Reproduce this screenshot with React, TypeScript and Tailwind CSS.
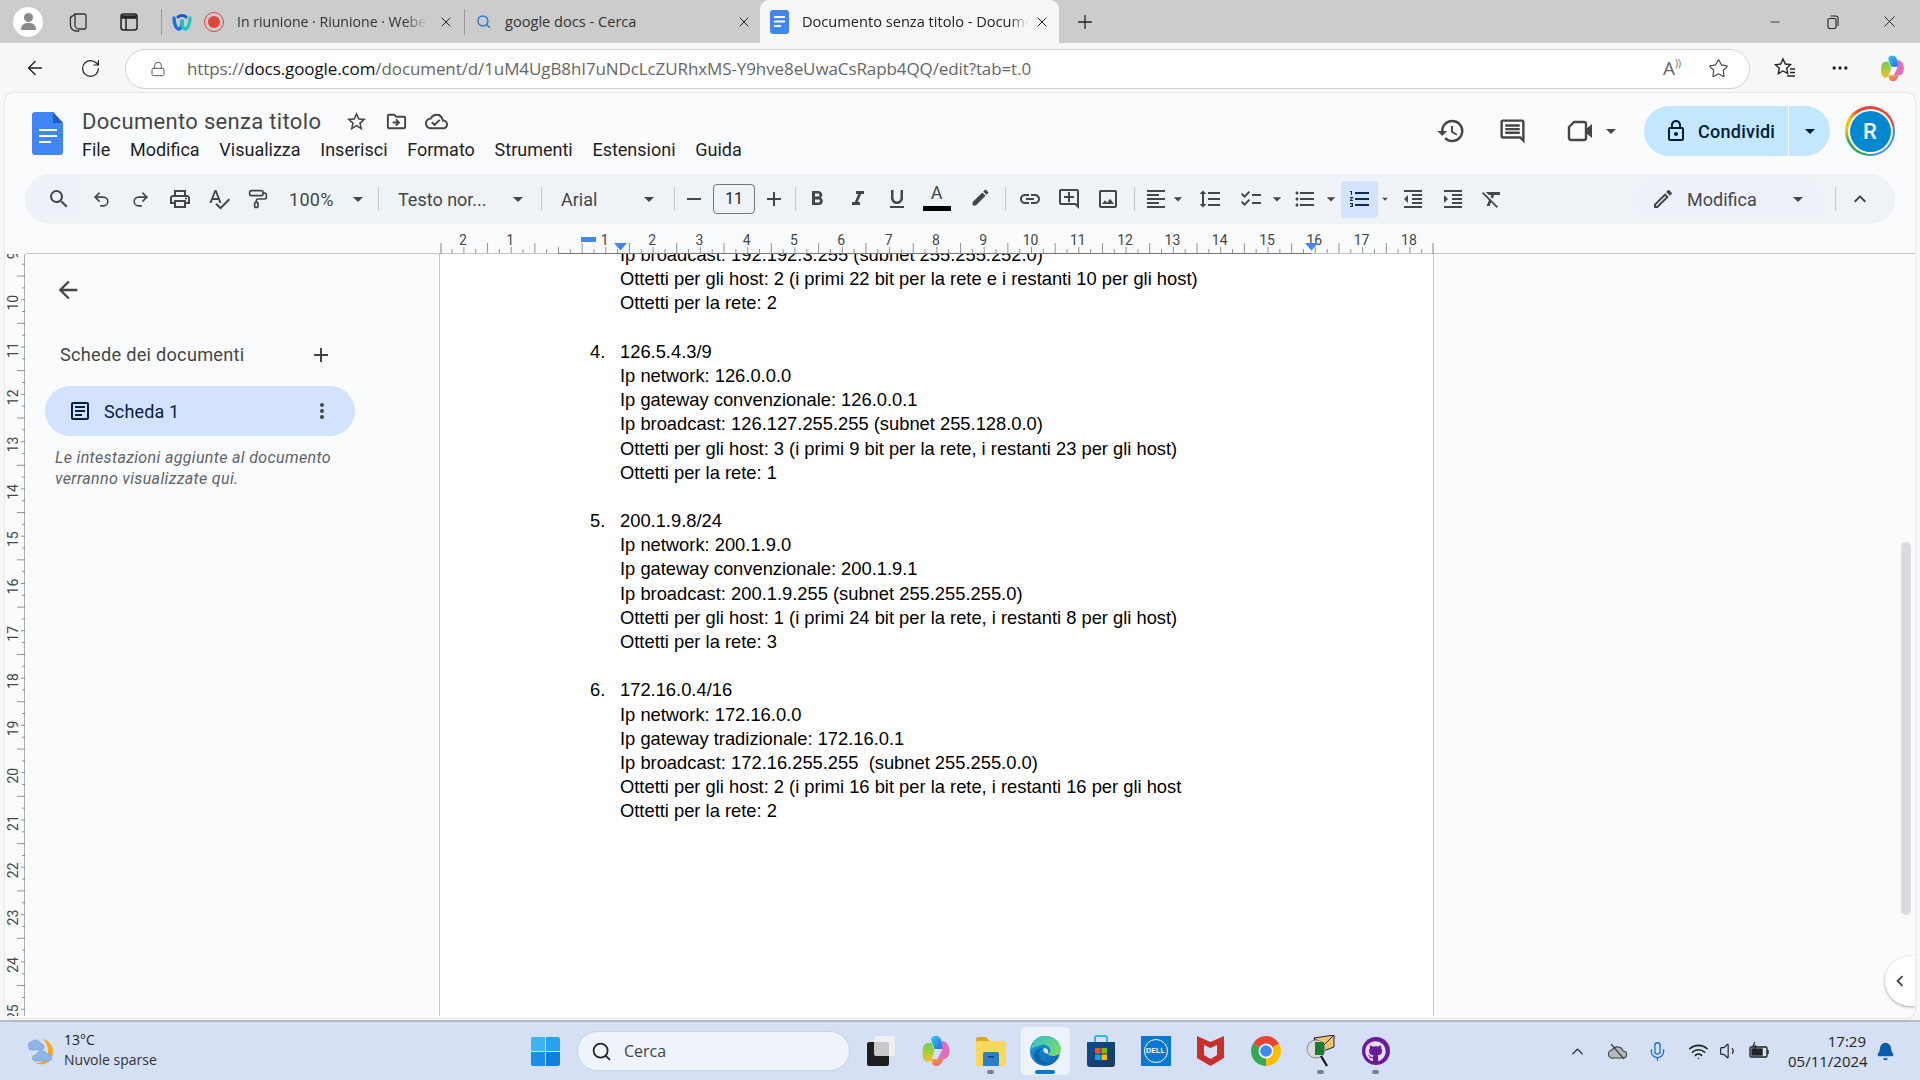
import React from "react";
import {
  MdSearch, MdOutlineLocalPrintshop, MdSpellcheck, MdArrowDropDown, MdRemove, MdAdd,
  MdFormatBold, MdFormatItalic, MdFormatUnderlined, MdEdit, MdInsertLink, MdOutlineAddComment, MdOutlineImage,
  MdFormatAlignLeft, MdFormatLineSpacing, MdChecklist, MdFormatListBulleted, MdFormatListNumbered,
  MdFormatIndentDecrease, MdFormatIndentIncrease, MdFormatClear, MdHistory, MdOutlineComment,
  MdLockOutline, MdOutlineEdit, MdExpandLess, MdArrowBack, MdMoreVert, MdOutlineArticle, MdStarBorder,
  MdOutlineDriveFileMove, MdOutlineCloudDone, MdChevronLeft,
} from "react-icons/md";
import { FaGithub } from "react-icons/fa";
import { ArrowLeft, RotateCw, Lock, Star, X, Plus, Minus, Search, ChevronUp, Mic, Wifi, Volume1, Bell, MoreHorizontal, Undo2, Redo2, PaintRoller } from "lucide-react";

const G = "#444746";

function Ic({ icon: C, size = 24, color = G }: { icon: any; size?: number; color?: string }) {
  return <C size={size} color={color} />;
}

function Sep({ cls }: { cls: string }) {
  return <div className={`w-px h-[24px] bg-[#c7c7c7] shrink-0 ${cls}`} />;
}

function TabClose({ cls }: { cls: string }) {
  return <X size={16} strokeWidth={1.5} color="#222" className={`shrink-0 ${cls}`} />;
}

function BrowserTabs() {
  return (
    <div className="h-[43px] bg-[#cccccc] flex items-center font-['Open_Sans',sans-serif] text-[14.6px] text-[#333] shrink-0">
      <div className="ml-[13px] w-[30px] h-[30px] rounded-full bg-white flex flex-col items-center justify-center shrink-0">
        <div className="w-[9px] h-[9px] rounded-full bg-[#8b8b8b]" />
        <div className="w-[15px] h-[7px] mt-[1px] rounded-t-[6px] bg-[#8b8b8b]" />
      </div>
      <svg className="ml-[24px] shrink-0" width="22" height="22" viewBox="0 0 22 22" fill="none" stroke="#333" strokeWidth="1.3">
        <path d="M8 3h9a2 2 0 0 1 2 2v11a2 2 0 0 1-2 2h-5a4 4 0 0 1-4-4z" />
        <path d="M5 5l-1 1a2 2 0 0 0-.6 1.4V14a6 6 0 0 0 6 6h3" />
        <path d="M8 3l-5 4" />
      </svg>
      <svg className="ml-[30px] shrink-0" width="20" height="20" viewBox="0 0 20 20" fill="none" stroke="#222" strokeWidth="1.5">
        <rect x="2" y="2" width="16" height="16" rx="2.5" />
        <path d="M2.5 5h15" strokeWidth="3.5" />
        <path d="M7 6v12" />
      </svg>
      <div className="ml-[22px] w-px h-[26px] bg-[#9a9a9a] shrink-0" />
      <svg className="ml-[10px] shrink-0" width="20" height="20" viewBox="0 0 20 20" fill="none">
        <path d="M2 6c0 8 3 11 5 11s3-4 3-8" stroke="#1d6fe0" strokeWidth="3.4" strokeLinecap="round" />
        <path d="M10 9c0 4 1 8 3 8s5-3 5-11" stroke="#23c6b8" strokeWidth="3.4" strokeLinecap="round" />
        <path d="M6 5c2-2 6-2 8 0" stroke="#1556c0" strokeWidth="3" strokeLinecap="round" />
      </svg>
      <div className="ml-[12px] w-[20px] h-[20px] rounded-full border-[1.5px] border-[#e0443a] flex items-center justify-center shrink-0">
        <div className="w-[12px] h-[12px] rounded-full bg-[#e0443a]" />
      </div>
      <div className="ml-[13px] w-[190px] overflow-hidden whitespace-nowrap shrink-0 text-[14.1px] [mask-image:linear-gradient(90deg,#000_88%,transparent)]">In riunione · Riunione · Webex</div>
      <TabClose cls="ml-[11px]" />
      <div className="ml-[10px] w-px h-[26px] bg-[#9a9a9a] shrink-0" />
      <Search size={15} strokeWidth={2.4} color="#2b7cd3" className="ml-[11px] shrink-0" />
      <div className="ml-[14px] w-[231px] whitespace-nowrap shrink-0">google docs - Cerca</div>
      <TabClose cls="shrink-0" />
      <div className="ml-[8px] w-[299px] h-[43px] bg-[#f7f7f7] rounded-t-[9px] flex items-center shrink-0">
        <svg className="ml-[10px] shrink-0" width="19" height="24" viewBox="0 0 19 24">
          <rect width="19" height="24" rx="3" fill="#4285f4" />
          <path d="M4 7h11M4 11.5h11M4 16h7" stroke="#fff" strokeWidth="2" />
        </svg>
        <div className="ml-[13px] w-[226px] overflow-hidden whitespace-nowrap shrink-0 text-[#222] [mask-image:linear-gradient(90deg,#000_92%,transparent)]">Documento senza titolo - Documenti Google</div>
        <TabClose cls="ml-[6px]" />
      </div>
      <Plus size={22} strokeWidth={1.4} color="#222" className="ml-[15px] shrink-0" />
      <Minus size={14} strokeWidth={1.4} color="#222" className="ml-[672px] shrink-0" />
      <svg className="ml-[44px] shrink-0" width="14" height="14" viewBox="0 0 14 14" fill="none" stroke="#222" strokeWidth="1.1">
        <rect x="2" y="3.5" width="8" height="10" rx="1.5" />
        <path d="M4.5 1h5a2.5 2.5 0 0 1 2.5 2.5V11" />
      </svg>
      <X size={19} strokeWidth={1.2} color="#222" className="ml-[40px] shrink-0" />
    </div>
  );
}

function AddressBar() {
  return (
    <div className="h-[50px] bg-[#f7f7f7] flex items-center shrink-0">
      <ArrowLeft size={22} strokeWidth={1.5} color="#222" className="ml-[24px] shrink-0" />
      <RotateCw size={21} strokeWidth={1.4} color="#222" className="ml-[34px] shrink-0" />
      <div className="ml-[24px] w-[1625px] h-[40px] mt-[1px] rounded-full bg-white border border-[#d2d2d2] flex items-center shrink-0">
        <Lock size={16} strokeWidth={1.4} color="#555" className="ml-[24px] shrink-0" />
        <div className="ml-[21px] text-[17px] text-[#666] font-['Open_Sans',sans-serif] tracking-[-0.1px] whitespace-nowrap">
          https://<span className="text-[#111]">docs.google.com</span>/document/d/1uM4UgB8hI7uNDcLcZURhxMS-Y9hve8eUwaCsRapb4QQ/edit?tab=t.0
        </div>
        <div className="ml-auto flex items-center">
          <div className="text-[19px] text-[#666] font-['Open_Sans',sans-serif] leading-none flex">A<span className="text-[10px] -mt-[1px]">))</span></div>
          <Star size={21} strokeWidth={1.3} color="#444" className="ml-[27px] mr-[20px]" />
        </div>
      </div>
      <svg className="ml-[23px] shrink-0" width="24" height="24" viewBox="0 0 24 24" fill="none" stroke="#222" strokeWidth="1.4">
        <path d="M10 3l2.3 5 5.2.6-3.800 3.600 1 5.300L10 15l-4.700 2.600 1-5.300-3.800-3.600L7.700 8z" />
        <path d="M17 13h5M17 16.500h5M14 20h8" />
      </svg>
      <MoreHorizontal size={20} strokeWidth={2} color="#222" className="ml-[33px] shrink-0" />
      <CopilotLogo cls="ml-[29px]" w={26} h={27} idp="a" />
    </div>
  );
}

function CopilotLogo({ cls, w, h, idp }: { cls: string; w: number; h: number; idp: string }) {
  return (
    <svg className={`shrink-0 ${cls}`} width={w} height={h} viewBox="0 0 30 32">
      <defs>
        <linearGradient id={`cp1${idp}`} x1="0" y1="0" x2="1" y2="1"><stop offset="0" stopColor="#35c1f1" /><stop offset="1" stopColor="#1b6fe0" /></linearGradient>
        <linearGradient id={`cp2${idp}`} x1="0" y1="0" x2="0" y2="1"><stop offset="0" stopColor="#6ad04a" /><stop offset="1" stopColor="#f6c22c" /></linearGradient>
        <linearGradient id={`cp3${idp}`} x1="0" y1="0" x2="1" y2="1"><stop offset="0" stopColor="#c86ef0" /><stop offset="1" stopColor="#f0709a" /></linearGradient>
        <linearGradient id={`cp4${idp}`} x1="0" y1="0" x2="1" y2="1"><stop offset="0" stopColor="#f8a43c" /><stop offset="1" stopColor="#ef5b6f" /></linearGradient>
      </defs>
      <path d="M15 1c4 0 5 2 6 5l3 8H14L11 6c-1-3 1-5 4-5z" fill={`url(#cp1${idp})`} />
      <path d="M8 8c-4 0-6 3-6 9 0 5 1 10 5 10 3 0 4-2 5-5l2-6-3-8z" fill={`url(#cp2${idp})`} />
      <path d="M21 6c5 0 8 4 8 10 0 4-2 8-5 8H17l5-10z" fill={`url(#cp3${idp})`} />
      <path d="M11 24h12l-2 4c-1 2-3 3-5 3-3 0-5-1-5-7z" fill={`url(#cp4${idp})`} />
    </svg>
  );
}

function DocsLogo() {
  return (
    <svg className="shrink-0" width="31" height="43" viewBox="0 0 31 43">
      <path d="M3 0h18l10 11v29a3 3 0 0 1-3 3H3a3 3 0 0 1-3-3V3a3 3 0 0 1 3-3z" fill="#4285f4" />
      <path d="M21 0l10 11H21z" fill="#1a5fc9" />
      <path d="M7 18h18M7 24h18M7 30h12" stroke="#fff" strokeWidth="2.2" />
    </svg>
  );
}

function DocsHeader() {
  const menu = ["File", "Modifica", "Visualizza", "Inserisci", "Formato", "Strumenti", "Estensioni", "Guida"];
  return (
    <div className="h-[81px] flex items-center shrink-0 pl-[27px] pr-[20px]">
      <DocsLogo />
      <div className="ml-[19px] flex flex-col mt-[4px]">
        <div className="flex items-center h-[28px]">
          <div className="text-[22px] leading-[28px] text-[#444746] tracking-[0.32px] whitespace-nowrap">Documento senza titolo</div>
          <div className="ml-[24px] flex items-center gap-[17px]">
            <Ic icon={MdStarBorder} size={23} />
            <Ic icon={MdOutlineDriveFileMove} size={23} />
            <Ic icon={MdOutlineCloudDone} size={23} />
          </div>
        </div>
        <div className="flex items-center gap-[19.7px] text-[18px] leading-[28px] text-[#1f1f1f]">
          {menu.map((m) => <span key={m}>{m}</span>)}
        </div>
      </div>
      <div className="ml-auto flex items-center -mt-[5px]">
        <Ic icon={MdHistory} size={30} />
        <div className="ml-[32px]"><Ic icon={MdOutlineComment} size={29} /></div>
        <svg className="ml-[40px] shrink-0" width="26" height="22" viewBox="0 0 26 22" fill="none" stroke={G} strokeWidth="2.4">
          <path d="M7 2h10a2 2 0 0 1 2 2v14a2 2 0 0 1-2 2H4a2 2 0 0 1-2-2V7z" strokeLinejoin="round" />
          <path d="M19 9l6-5v14l-6-5z" fill={G} stroke="none" />
        </svg>
        <div className="ml-[6px]"><Ic icon={MdArrowDropDown} size={24} /></div>
        <div className="ml-[21px] h-[50px] w-[186px] rounded-full bg-[#c2e7ff] flex items-center text-[#001d35] shrink-0">
          <div className="ml-[20px]"><Ic icon={MdLockOutline} size={24} color="#001d35" /></div>
          <div className="ml-[10px] text-[18px] font-medium tracking-[0.25px] w-[90px]">Condividi</div>
          <div className="w-px h-[50px] bg-white" />
          <div className="ml-[9px]"><Ic icon={MdArrowDropDown} size={24} color="#001d35" /></div>
        </div>
        <div className="ml-[15px] w-[50px] h-[50px] rounded-full bg-[conic-gradient(#ea4335_0deg,#ea4335_70deg,#4285f4_90deg,#4285f4_160deg,#34a853_200deg,#34a853_245deg,#fbbc04_270deg,#fbbc04_300deg,#ea4335_330deg)] flex items-center justify-center shrink-0">
          <div className="w-[45px] h-[45px] rounded-full bg-white flex items-center justify-center">
            <div className="w-[41px] h-[41px] rounded-full bg-[#0288d1] text-white text-[22px] font-medium flex items-center justify-center">R</div>
          </div>
        </div>
      </div>
    </div>
  );
}

function Dd({ cls = "w-[24px]" }: { cls?: string }) {
  return <div className={`flex items-center justify-center shrink-0 ${cls}`}><Ic icon={MdArrowDropDown} size={24} /></div>;
}

function Tb({ icon, cls = "w-[39px]", size = 24 }: { icon: any; cls?: string; size?: number }) {
  return <div className={`flex items-center justify-center shrink-0 ${cls}`}><Ic icon={icon} size={size} /></div>;
}

function Toolbar() {
  return (
    <div className="mx-[20px] h-[50px] bg-[#eff3f8] rounded-full flex items-center pl-[11px] pr-[12px] shrink-0 text-[18px] text-[#444746]">
      <div className="w-[46px] h-[35px] bg-[#edf1fa] flex items-center justify-center shrink-0"><Ic icon={MdSearch} /></div>
      <Tb icon={Undo2} size={19} />
      <Tb icon={Redo2} size={19} />
      <Tb icon={MdOutlineLocalPrintshop} />
      <Tb icon={MdSpellcheck} />
      <Tb icon={PaintRoller} size={20} />
      <div className="ml-[12px] w-[47px] tracking-[0.3px]">100%</div>
      <Dd cls="ml-[10px] w-[24px]" />
      <Sep cls="ml-[8px]" />
      <div className="ml-[19px] w-[108px] whitespace-nowrap">Testo nor...</div>
      <Dd />
      <Sep cls="ml-[11px]" />
      <div className="ml-[19px] w-[76px]">Arial</div>
      <Dd />
      <Sep cls="ml-[13px]" />
      <Tb icon={MdRemove} cls="w-[38px]" />
      <div className="w-[42px] h-[30px] border border-[#747775] rounded-[4px] flex items-center justify-center text-[16px] text-[#1f1f1f] shrink-0">11</div>
      <Tb icon={MdAdd} cls="w-[38px]" />
      <Sep cls="ml-[2px]" />
      <Tb icon={MdFormatBold} cls="ml-[1px] w-[39px]" />
      <Tb icon={MdFormatItalic} cls="ml-[2px] w-[39px]" />
      <Tb icon={MdFormatUnderlined} />
      <div className="ml-[1px] w-[39px] h-[36px] flex flex-col items-center shrink-0 relative">
        <div className="text-[18px] leading-[24px] h-[25px]">A</div>
        <div className="w-[28px] h-[5px] bg-black" />
      </div>
      <div className="ml-[4px] w-[40px] -mt-[4px] flex justify-center shrink-0"><Ic icon={MdEdit} size={21} /></div>
      <Sep cls="ml-[5px]" />
      <Tb icon={MdInsertLink} cls="ml-[4px] w-[39px]" />
      <Tb icon={MdOutlineAddComment} />
      <Tb icon={MdOutlineImage} cls="w-[40px]" />
      <Sep cls="ml-[6px]" />
      <Tb icon={MdFormatAlignLeft} cls="ml-[9px] w-[24px]" />
      <Dd cls="w-[20px]" />
      <Tb icon={MdFormatLineSpacing} cls="ml-[2px] w-[40px]" />
      <Tb icon={MdChecklist} cls="ml-[9px] w-[24px]" />
      <Dd cls="ml-[4px] w-[20px]" />
      <Tb icon={MdFormatListBulleted} cls="ml-[6px] w-[24px]" />
      <Dd cls="ml-[4px] w-[20px]" />
      <div className="w-[37px] h-[37px] rounded-[4px] bg-[#d3e3fd] flex items-center justify-center shrink-0"><Ic icon={MdFormatListNumbered} color="#0b2a55" /></div>
      <Dd cls="w-[14px]" />
      <Tb icon={MdFormatIndentDecrease} cls="ml-[1px] w-[40px]" />
      <Tb icon={MdFormatIndentIncrease} />
      <Tb icon={MdFormatClear} />
      <div className="ml-auto w-[189px] h-[36px] rounded-full bg-[#edf1fa] flex items-center shrink-0">
        <div className="ml-[16px]"><Ic icon={MdOutlineEdit} /></div>
        <div className="ml-[12px] w-[99px]">Modifica</div>
        <Ic icon={MdArrowDropDown} />
      </div>
      <Sep cls="ml-[11px]" />
      <Tb icon={MdExpandLess} cls="w-[47px]" />
    </div>
  );
}

function TopRuler() {
  const L = 5;
  const step = 47.3;
  const zero = 558.5;
  const ticks: React.ReactNode[] = [];
  for (let i = 0; i * (step / 4) + 441 <= 1434; i++) {
    const x = zero + Math.round((441 - zero) / (step / 4)) * (step / 4) + i * (step / 4);
    if (x < 441 || x > 1434) continue;
    const k = Math.round((x - zero) / (step / 4));
    const m = ((k % 4) + 4) % 4;
    const y = m === 2 ? 243 : m === 0 ? 247 : 249;
    ticks.push(<line key={i} x1={x - L} x2={x - L} y1={y - 224} y2={253 - 224} stroke="#777" strokeWidth="0.8" />);
  }
  const nums = [-2, -1, 1, 2, 3, 4, 5, 6, 7, 8, 9, 10, 11, 12, 13, 14, 15, 16, 17, 18];
  return (
    <div className="h-[30px] shrink-0">
      <svg width="1910" height="30" viewBox="0 0 1910 30" className="block">
        <line x1="21" x2="1910" y1="29.500" y2="29.500" stroke="#c4c7c5" />
        <line x1="553" x2="1306" y1="29.500" y2="29.500" stroke="#777" />
        <line x1={436} x2={436} y1={19} y2={30} stroke="#888" />
        <line x1={1428} x2={1428} y1={19} y2={30} stroke="#888" />
        {ticks}
        {nums.map((n) => (
          <text key={n} x={zero + n * step - L - 1} y={21} textAnchor="middle" fontSize="14" fill="#444746" fontFamily="Roboto, sans-serif">{Math.abs(n)}</text>
        ))}
        <rect x={576} y={13} width={15} height={5} fill="#4285f4" />
        <path d="M609 19h13l-6.500 7.500z" fill="#4285f4" />
        <path d="M1300 19h13l-6.500 7.500z" fill="#4285f4" />
      </svg>
    </div>
  );
}

function LeftRuler() {
  const step = 47.3;
  const base = 350 - 254;
  const ticks: React.ReactNode[] = [];
  for (let i = -12; i < 70; i++) {
    const y = base + (i * step) / 4 - 3;
    const m = ((i % 4) + 4) % 4;
    const w = m === 2 ? 8 : m === 0 ? 4 : 3;
    if (y < 0) continue;
    ticks.push(<line key={i} x1={20 - w} x2={20} y1={y} y2={y} stroke="#777" strokeWidth="0.8" />);
  }
  const nums = Array.from({ length: 17 }, (_, i) => i + 9);
  return (
    <div className="w-[20px] shrink-0">
      <svg width="20" height="762" viewBox="0 0 20 762" className="block">
        <line x1="19.500" x2="19.500" y1="0" y2="762" stroke="#b0b0b0" />
        {ticks}
        {nums.map((n) => {
          const y = base + (n - 11) * step;
          return <text key={n} x={8} y={y} transform={`rotate(-90 8 ${y})`} dominantBaseline="central" textAnchor="middle" fontSize="14" fill="#444746" fontFamily="Roboto, sans-serif">{n}</text>;
        })}
      </svg>
    </div>
  );
}

function Sidebar() {
  return (
    <div className="w-[415px] shrink-0 border-r border-[#c7c7c7] flex flex-col">
      <div className="mt-[22px] ml-[29px]"><Ic icon={MdArrowBack} size={28} /></div>
      <div className="mt-[37px] ml-[35px] w-[273px] flex items-center justify-between text-[18.2px] text-[#444746] tracking-[0.25px]">
        <span className="whitespace-nowrap">Schede dei documenti</span>
        <Ic icon={MdAdd} size={24} />
      </div>
      <div className="mt-[18px] ml-[20px] w-[310px] h-[50px] rounded-full bg-[#d3e3fd] flex items-center">
        <div className="ml-[23px]"><Ic icon={MdOutlineArticle} size={24} color="#041e49" /></div>
        <div className="ml-[12px] text-[18px] text-[#041e49] tracking-[0.15px]">Scheda 1</div>
        <div className="ml-auto mr-[21px]"><Ic icon={MdMoreVert} size={24} /></div>
      </div>
      <div className="mt-[11px] ml-[30px] w-[300px] text-[16px] leading-[21px] italic text-[#5f6368] tracking-[0.35px]">
        Le intestazioni aggiunte al documento verranno visualizzate qui.
      </div>
    </div>
  );
}

const docLines: [string, string][] = [
  ["", "Ip broadcast: 192.192.3.255 (subnet 255.255.252.0)"],
  ["", "Ottetti per gli host: 2 (i primi 22 bit per la rete e i restanti 10 per gli host)"],
  ["", "Ottetti per la rete: 2"],
  ["", ""],
  ["4.", "126.5.4.3/9"],
  ["", "Ip network: 126.0.0.0"],
  ["", "Ip gateway convenzionale: 126.0.0.1"],
  ["", "Ip broadcast: 126.127.255.255 (subnet 255.128.0.0)"],
  ["", "Ottetti per gli host: 3 (i primi 9 bit per la rete, i restanti 23 per gli host)"],
  ["", "Ottetti per la rete: 1"],
  ["", ""],
  ["5.", "200.1.9.8/24"],
  ["", "Ip network: 200.1.9.0"],
  ["", "Ip gateway convenzionale: 200.1.9.1"],
  ["", "Ip broadcast: 200.1.9.255 (subnet 255.255.255.0)"],
  ["", "Ottetti per gli host: 1 (i primi 24 bit per la rete, i restanti 8 per gli host)"],
  ["", "Ottetti per la rete: 3"],
  ["", ""],
  ["6.", "172.16.0.4/16"],
  ["", "Ip network: 172.16.0.0"],
  ["", "Ip gateway tradizionale: 172.16.0.1"],
  ["", "Ip broadcast: 172.16.255.255  (subnet 255.255.0.0)"],
  ["", "Ottetti per gli host: 2 (i primi 16 bit per la rete, i restanti 16 per gli host"],
  ["", "Ottetti per la rete: 2"],
];

function Page() {
  return (
    <div className="w-[994px] shrink-0 bg-white border-r border-[#c7c7c7] overflow-hidden font-['Liberation_Sans',sans-serif] text-[18.33px] text-black pl-[150px]">
      <div className="-mt-[11px]">
        {docLines.map(([n, t], i) => (
          <div key={i} className="flex h-[24.2px] leading-[24.2px] whitespace-pre">
            <span className="w-[30px] shrink-0">{n}</span>
            <span>{t}</span>
          </div>
        ))}
      </div>
    </div>
  );
}

function RightGutter() {
  return (
    <div className="flex-1 relative">
      <div className="absolute left-[467px] top-[288px] w-[10px] h-[373px] rounded-full bg-[#dadce0]" />
      <div className="absolute right-0 top-[702px] w-[30px] h-[50px] rounded-l-full bg-white shadow-[0_1px_3px_rgba(0,0,0,0.35)] flex items-center justify-center">
        <Ic icon={MdChevronLeft} size={22} />
      </div>
    </div>
  );
}

function FolderIcon() {
  return (
    <svg width="30" height="29" viewBox="0 0 30 29">
      <path d="M0 2a2 2 0 0 1 2-2h8l3 3v4H0z" fill="#e0a526" />
      <rect y="4" width="30" height="25" rx="1.500" fill="#fbd75b" />
      <path d="M9 15h12a2 2 0 0 1 2 2v12H7V17a2 2 0 0 1 2-2z" fill="#2b7fc4" />
      <rect x="12" y="19" width="6" height="1.500" fill="#123f70" />
    </svg>
  );
}

function EdgeIcon() {
  return (
    <svg width="32" height="32" viewBox="0 0 32 32">
      <defs>
        <linearGradient id="e1" x1="0" y1="0" x2="1" y2="1"><stop offset="0" stopColor="#1ba2d8" /><stop offset="1" stopColor="#0b5fb0" /></linearGradient>
        <linearGradient id="e2" x1="0" y1="0" x2="1" y2="1"><stop offset="0" stopColor="#35c1c9" /><stop offset="1" stopColor="#7fe05c" /></linearGradient>
      </defs>
      <circle cx="15" cy="16" r="15" fill="url(#e1)" />
      <path d="M1 14C3 5 9 1 16 1c8 0 15 6 15 13 0 5-4 7-8 7-3 0-5-1-5-2 2-1 3-3 2-5-1-3-5-5-9-4-5 1-8 3-10 4z" fill="url(#e2)" />
      <path d="M13 13c-4 2-5 7-2 11 2 3 5 4 9 4-6 3-14 0-16-7-1-3 3-8 9-8z" fill="#0a4a96" opacity="0.55" />
      <path d="M14 13c3 0 5 2 4 6-4-1-6-3-4-6z" fill="#d5e0f5" />
    </svg>
  );
}

function StoreIcon() {
  return (
    <svg width="30" height="32" viewBox="0 0 30 32">
      <defs><linearGradient id="s1" x1="0" y1="0" x2="1" y2="1"><stop offset="0" stopColor="#0d4f90" /><stop offset="1" stopColor="#1c3660" /></linearGradient></defs>
      <path d="M9 7V3a2 2 0 0 1 2-2h8a2 2 0 0 1 2 2v4" fill="none" stroke="#29b6e8" strokeWidth="2" />
      <path d="M1 7h28v22a3 3 0 0 1-3 3H4a3 3 0 0 1-3-3z" fill="url(#s1)" />
      <rect x="9" y="13" width="5.500" height="5.500" fill="#f25022" />
      <rect x="15.500" y="13" width="5.500" height="5.500" fill="#7fba00" />
      <rect x="9" y="19.500" width="5.500" height="5.500" fill="#00a4ef" />
      <rect x="15.500" y="19.500" width="5.500" height="5.500" fill="#ffb900" />
    </svg>
  );
}

function DellIcon() {
  return (
    <div className="w-[30px] h-[30px] bg-[#0a78d1] flex items-center justify-center">
      <div className="w-[24px] h-[24px] rounded-full border border-white flex items-center justify-center text-[7px] font-bold text-white font-['Liberation_Sans',sans-serif] tracking-[0.2px]">DELL</div>
    </div>
  );
}

function McAfeeIcon() {
  return (
    <svg width="27" height="30" viewBox="0 0 27 30">
      <path d="M0 0l13.500 6L27 0v22l-13.500 8L0 22z" fill="#c8302c" />
      <path d="M7 9l6.500 3 6.500-3v10l-6.500 4-6.500-4z" fill="#d5e0f5" />
    </svg>
  );
}

function ChromeIcon() {
  return (
    <svg width="30" height="30" viewBox="0 0 30 30">
      <path d="M15 15 L2.010 7.500 A15 15 0 0 1 27.990 7.500 Z" fill="#ea4335" />
      <path d="M15 15 L27.990 7.500 A15 15 0 0 1 15 30 Z" fill="#fbbc04" />
      <path d="M15 15 L15 30 A15 15 0 0 1 2.010 7.500 Z" fill="#34a853" />
      <circle cx="15" cy="15" r="7.500" fill="#fff" />
      <circle cx="15" cy="15" r="5.800" fill="#4285f4" />
    </svg>
  );
}

function MailIcon() {
  return (
    <svg width="30" height="32" viewBox="0 0 30 32">
      <path d="M8 3L28 0v12l-16 6z" fill="#eec46d" stroke="#222" strokeWidth="1" />
      <path d="M8 3l10 7L28 0" fill="none" stroke="#222" strokeWidth="1" />
      <circle cx="10" cy="14" r="9" fill="#d8dcd8" stroke="#888" />
      <rect x="9" y="7" width="9" height="13" fill="#1c7a2c" />
      <path d="M15 21l6 10" stroke="#111" strokeWidth="2.200" />
    </svg>
  );
}

function WeatherIcon() {
  return (
    <svg width="31" height="29" viewBox="0 0 31 29">
      <path d="M18 2c8 2 12 10 9 18-3 7-11 9-17 6 9 0 14-4 13-12 0-5-2-9-5-12z" fill="#f6a623" />
      <path d="M4 10a3 3 0 0 1 2-5 6 6 0 0 1 10 2 3 3 0 0 1 0 6H5a3 3 0 0 1-1-3z" fill="#8fb4e8" stroke="#6f97d3" strokeWidth="0.6" />
      <path d="M10 24a3 3 0 0 1 1-6 6 6 0 0 1 11-1 3.500 3.500 0 0 1 2 7z" fill="#8fb4e8" stroke="#6f97d3" strokeWidth="0.6" />
    </svg>
  );
}

function TaskCell({ children, dot = false, active = false }: { children: React.ReactNode; dot?: boolean; active?: boolean }) {
  return (
    <div className={`w-[49px] h-[48px] mx-[3px] relative flex items-center justify-center shrink-0 rounded-[5px] ${active ? "bg-[#eef2fb]" : ""}`}>
      {children}
      {dot && <div className="absolute bottom-[1px] left-[21px] w-[7px] h-[4px] rounded-full bg-[#7b7f87]" />}
      {active && <div className="absolute bottom-[1px] left-[14px] w-[20px] h-[4px] rounded-full bg-[#0a78d1]" />}
    </div>
  );
}

function Taskbar() {
  return (
    <div className="h-[60px] bg-[#d5e0f5] border-t-[2px] border-[#b4bccb] flex items-center shrink-0 font-['Open_Sans',sans-serif] text-[#222]">
      <div className="ml-[25px] shrink-0"><WeatherIcon /></div>
      <div className="ml-[8px] w-[467px] text-[14px] leading-[20px] -mt-[2px] shrink-0">
        <div>13°C</div>
        <div className="text-[#333]">Nuvole sparse</div>
      </div>
      <div className="grid grid-cols-2 gap-[1px] w-[29px] h-[29px] shrink-0">
        <div className="bg-[#3fb4f2] rounded-tl-[2px]" />
        <div className="bg-[#28a2ee] rounded-tr-[2px]" />
        <div className="bg-[#1a8fe6] rounded-bl-[2px]" />
        <div className="bg-[#0f7fd9] rounded-br-[2px]" />
      </div>
      <div className="ml-[17px] w-[273px] h-[40px] rounded-full bg-[#eff4fc] border border-[#c8d2e6] flex items-center shrink-0">
        <Search size={21} strokeWidth={2} color="#222" className="ml-[13px]" />
        <span className="ml-[12px] text-[16px] text-[#444]">Cerca</span>
      </div>
      <div className="ml-[17px] w-[28px] h-[30px] relative shrink-0">
        <div className="absolute left-0 bottom-0 w-[22px] h-[24px] bg-[#1e1e1e] rounded-[2px]" />
        <div className="absolute right-0 top-0 w-[21px] h-[20px] bg-[#f2f2f2]/80 rounded-[2px]" />
      </div>
      <div className="ml-[13px] flex items-center shrink-0">
        <TaskCell><CopilotLogo cls="" w={31} h={32} idp="b" /></TaskCell>
        <TaskCell dot><FolderIcon /></TaskCell>
        <TaskCell active><EdgeIcon /></TaskCell>
        <TaskCell><StoreIcon /></TaskCell>
        <TaskCell><DellIcon /></TaskCell>
        <TaskCell><McAfeeIcon /></TaskCell>
        <TaskCell><ChromeIcon /></TaskCell>
        <TaskCell dot><MailIcon /></TaskCell>
        <TaskCell dot>
          <div className="w-[28px] h-[28px] rounded-full bg-[#6a1b9a] flex items-center justify-center"><FaGithub size={21} color="#e8dcf2" /></div>
        </TaskCell>
      </div>
      <ChevronUp size={19} strokeWidth={1.6} color="#222" className="ml-[165px] shrink-0" />
      <svg className="ml-[20px] shrink-0" width="21" height="21" viewBox="0 0 21 21" fill="#b5b8bd" stroke="#444" strokeWidth="1.2">
        <path d="M6 17a4 4 0 0 1-1-8 6 6 0 0 1 11 1 3.500 3.500 0 0 1 0 7z" />
        <path d="M4 3l13 15" fill="none" />
      </svg>
      <Mic size={21} strokeWidth={1.5} color="#1a6fd0" className="ml-[19px] shrink-0" />
      <Wifi size={21} strokeWidth={1.8} color="#222" className="ml-[20px] shrink-0" />
      <Volume1 size={20} strokeWidth={1.4} color="#222" className="ml-[10px] shrink-0" />
      <svg className="ml-[9px] shrink-0" width="22" height="22" viewBox="0 0 22 22" fill="none" stroke="#222" strokeWidth="1.4">
        <rect x="2" y="7" width="17" height="10" rx="1.500" />
        <rect x="4" y="9" width="10" height="6" fill="#222" />
        <path d="M20 10v4" />
        <path d="M7 2l-2 4h3l-2 4" strokeWidth="1.100" />
      </svg>
      <div className="ml-[18px] w-[78px] text-right text-[15px] leading-[20px] -mt-[1px] shrink-0">
        <div>17:29</div>
        <div>05/11/2024</div>
      </div>
      <Bell size={19} fill="#0b5cad" color="#0b5cad" className="ml-[10px] shrink-0" />
    </div>
  );
}

export default function App() {
  return (
    <div className="w-[1920px] h-[1080px] overflow-hidden flex flex-col bg-[#f7f7f7] font-['Roboto',sans-serif]">
      <BrowserTabs />
      <AddressBar />
      <div className="mx-[5px] h-[925px] mb-[2px] bg-[#f9fbfd] rounded-[8px] shadow-[0_0_2px_rgba(0,0,0,0.2)] flex flex-col overflow-hidden shrink-0">
        <DocsHeader />
        <Toolbar />
        <TopRuler />
        <div className="flex h-[762px]">
          <LeftRuler />
          <Sidebar />
          <Page />
          <RightGutter />
        </div>
      </div>
      <Taskbar />
    </div>
  );
}
